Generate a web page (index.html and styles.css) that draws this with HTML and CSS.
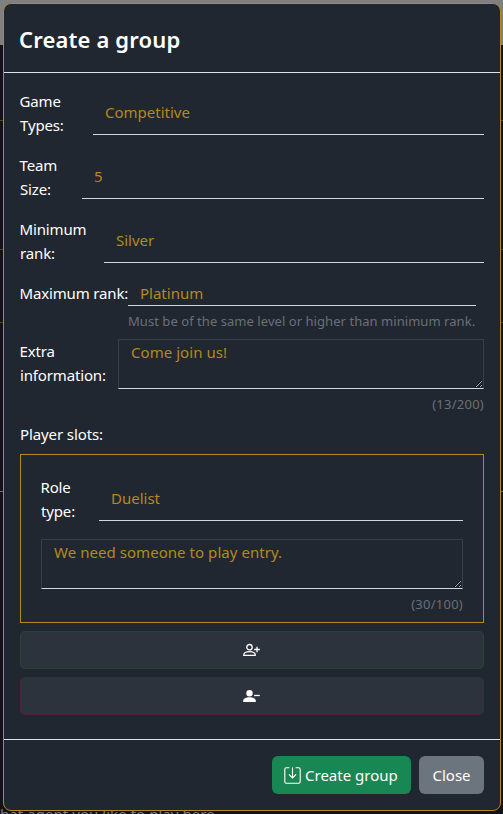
FILE: index.html
```html
<!DOCTYPE html>
<html lang="en">
<head>
<meta charset="utf-8">
<title>Create a group</title>
<link rel="stylesheet" href="styles.css">
</head>
<body>
<div class="page">
  <div class="page-nav"></div>
  <div class="page-row row-a"></div>
  <div class="page-row row-b"></div>
  <div class="page-row row-c"></div>
  <div class="page-row row-d"></div>
  <div class="page-row row-e"></div>
  <p class="page-hint">hat agent you like to play here</p>
</div>
<div class="modal">
  <header class="modal-header"><h1>Create a group</h1></header>
  <main class="modal-body">
    <div class="field game"><label>Game<br>Types:</label><div class="select">Competitive</div></div>
    <div class="field team"><label>Team<br>Size:</label><div class="select">5</div></div>
    <div class="field min"><label>Minimum<br>rank:</label><div class="select">Silver</div></div>
    <div class="field max">
      <label>Maximum rank:</label>
      <div class="stack"><div class="select">Platinum</div><small>Must be of the same level or higher than minimum rank.</small></div>
    </div>
    <div class="field extra">
      <label>Extra<br>information:</label>
      <div class="stack"><textarea>Come join us!</textarea><small class="count">(13/200)</small></div>
    </div>
    <p class="slots-title">Player slots:</p>
    <section class="slot">
      <div class="field role"><label>Role<br>type:</label><div class="select">Duelist</div></div>
      <textarea>We need someone to play entry.</textarea>
      <small class="count">(30/100)</small>
    </section>
    <button class="slot-btn add" aria-label="Add player slot">
      <svg width="18" height="16" viewBox="0 0 18 16"><g fill="none" stroke="#fff" stroke-width="1.3"><circle cx="6.5" cy="5.2" r="2.7"/><path d="M.8 13.3V12.6C1.1 10.5 3.5 9.6 6.5 9.6S11.9 10.5 12.2 12.6V13.3ZM11.2 7.5H16.8M14 4.7V10.3"/></g></svg>
    </button>
    <button class="slot-btn remove" aria-label="Remove player slot">
      <svg width="18" height="16" viewBox="0 0 18 16"><circle cx="6.5" cy="5.2" r="3.2" fill="#fff"/><path d="M.2 14V12.8C.2 10.6 3 9.2 6.5 9.2S12.8 10.6 12.8 12.8V14Z" fill="#fff"/><path d="M11.2 7.5H16.8" stroke="#fff" stroke-width="1.3"/></svg>
    </button>
  </main>
  <footer class="modal-footer">
    <button class="btn create">
      <svg width="17" height="17" viewBox="0 0 17 17" fill="none" stroke="#fff" stroke-width="1.1" stroke-linecap="round" stroke-linejoin="round"><path d="M5 .8H2.3Q.8.8.8 2.3V14.7Q.8 16.2 2.3 16.2H14.7Q16.2 16.2 16.2 14.7V2.3Q16.2.8 14.7.8H12M8.5.8V10.8M5.2 7.7L8.5 11L11.8 7.7"/></svg>
      <span>Create group</span>
    </button>
    <button class="btn close"><span>Close</span></button>
  </footer>
</div>
</body>
</html>
```

FILE: styles.css
```css
* { box-sizing: border-box; }

body {
  margin: 0;
  height: 814px;
  overflow: hidden;
  position: relative;
  background: #111316;
  color: #fff;
  font: 15px/24px "Noto Sans", "Open Sans", sans-serif;
}

h1, p { margin: 0; }

.page { height: 814px; overflow: hidden; display: flex; flex-direction: column; }
.page-nav { height: 45px; flex: none; background: #808080; }
.page-row { flex: none; border-bottom: 1px solid #5c460d; }
.row-a { height: 76px; }
.row-b { height: 129px; }
.row-c { height: 73px; }
.row-d { height: 169px; border-color: #6d7074; }
.row-e { height: 310px; border: 0; }
.page-hint { flex: none; color: #7b7d80; white-space: nowrap; line-height: 24px; letter-spacing: .05px; }

.modal {
  position: absolute;
  left: 3px;
  top: 3px;
  width: 498px;
  height: 808px;
  display: flex;
  flex-direction: column;
  background: #212730;
  border: 1px solid #b28a1d;
  border-radius: 8px;
}

.modal-header { height: 69px; padding: 17px 16px; border-bottom: 1px solid #dee2e6; }
.modal-header h1 { font-size: 22px; line-height: 36px; font-weight: 600; letter-spacing: .15px; margin-left: -1px; }

.modal-body { flex: 1; padding: 16px 16px 0; display: flex; flex-direction: column; }

.field { display: flex; flex: none; height: 64px; }
.field label { flex: none; white-space: nowrap; letter-spacing: -.15px; text-indent: -.5px; }
.select { flex: 1; height: 46px; padding: 11px 12px; border-bottom: 1px solid #d4d6e0; color: #b28a1d; }
.game label { width: 73px; }
.team label { width: 62px; }
.min label { width: 84px; }
.role label { width: 58px; }
.stack { flex: 1; display: flex; flex-direction: column; }

.max { height: 58px; padding-right: 8px; }
.max label { width: 108px; }
.max .select { flex: none; height: 25px; padding-top: 0; }
.max small { margin-top: 5px; white-space: nowrap; letter-spacing: .05px; }

.extra { height: 83px; }
.extra label { width: 98px; }

small { color: #697079; font-size: 13px; line-height: 21px; }
.count { display: block; text-align: right; margin-top: 5px; letter-spacing: .25px; }

textarea {
  display: block;
  width: 100%;
  height: 50px;
  padding: 0 12px;
  resize: vertical;
  overflow: hidden;
  color: #b28a1d;
  background: transparent;
  border: 1px solid #393d46;
  border-bottom-color: #d4d6e0;
  font: inherit;
  letter-spacing: .05px;
}

.slots-title { margin-bottom: 8px; letter-spacing: -.1px; }

.slot { flex: none; height: 169px; padding: 20px; border: 1px solid #b28a1d; }

.slot-btn {
  flex: none;
  height: 38px;
  margin-top: 8px;
  padding: 0;
  display: flex;
  align-items: center;
  justify-content: center;
  border: 1px solid #244734;
  border-radius: 5px;
  background: #2d333d;
}
.slot-btn.remove { border-color: #4a282f; }

.modal-footer {
  flex: none;
  height: 71px;
  padding: 16px;
  display: flex;
  justify-content: flex-end;
  gap: 8px;
  border-top: 1px solid #dee2e6;
}
.btn {
  height: 38px;
  padding: 0 12px;
  display: flex;
  align-items: center;
  gap: 4px;
  border: 0;
  border-radius: 6px;
  color: #fff;
  font: inherit;
  white-space: nowrap;
}
.create { width: 139px; background: #198754; }
.close { width: 65px; justify-content: center; background: #6c757d; }
```
